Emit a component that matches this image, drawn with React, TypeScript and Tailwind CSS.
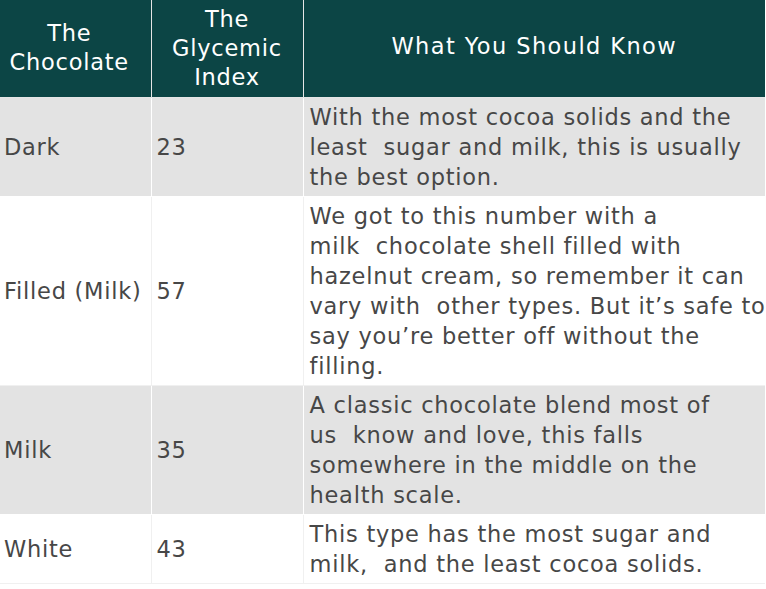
import React from "react";

const rows: { name: string; gi: string; lines: string[]; gray: boolean }[] = [
  {
    name: "Dark",
    gi: "23",
    lines: ["With the most cocoa solids and the", "least  sugar and milk, this is usually", "the best option."],
    gray: true,
  },
  {
    name: "Filled (Milk)",
    gi: "57",
    lines: [
      "We got to this number with a",
      "milk  chocolate shell filled with",
      "hazelnut cream, so remember it can",
      "vary with  other types. But it\u2019s safe to",
      "say you\u2019re better off without the",
      "filling.",
    ],
    gray: false,
  },
  {
    name: "Milk",
    gi: "35",
    lines: ["A classic chocolate blend most of", "us  know and love, this falls", "somewhere in the middle on the", "health scale."],
    gray: true,
  },
  {
    name: "White",
    gi: "43",
    lines: ["This type has the most sugar and", "milk,  and the least cocoa solids."],
    gray: false,
  },
];

export default function App() {
  return (
    <div className="w-[766px] h-[589px] bg-white" style={{ fontFamily: '"DejaVu Sans", sans-serif' }}>
      <table className="w-[765px] border-collapse table-fixed text-[22.5px] tracking-[0.75px] leading-[30px] text-[#474747]">
        <colgroup>
          <col className="w-[151px]" />
          <col className="w-[152px]" />
          <col />
        </colgroup>
        <thead>
          <tr className="bg-[#0c4545] text-white h-[97px]">
            <th className="font-normal text-center leading-[29px] border-r border-b border-[#e6e6e6] pl-0 pr-[12px] whitespace-nowrap">The<br />Chocolate</th>
            <th className="font-normal text-center leading-[29px] border-r border-b border-[#e6e6e6] px-1">The<br />Glycemic<br />Index</th>
            <th className="font-normal text-center leading-[29px] tracking-[1.4px] pb-[3px] border-b border-[#e6e6e6] px-1">What You Should Know</th>
          </tr>
        </thead>
        <tbody>
          {rows.map((r) => (
            <tr key={r.name} className={r.gray ? "bg-[#e3e3e3]" : "bg-white"}>
              <td className={`pl-1 pr-0 py-1 align-middle whitespace-nowrap border-r border-b ${r.gray ? "border-white" : "border-[#f0f0f0]"}`}>{r.name}</td>
              <td className={`pl-[5px] py-1 align-middle border-r border-b ${r.gray ? "border-white" : "border-[#f0f0f0]"}`}>{r.gi}</td>
              <td className={`pl-[6px] py-1 align-middle whitespace-pre border-b ${r.gray ? "border-white" : "border-[#f0f0f0]"}`}>
                {r.lines.map((l, i) => (
                  <div key={i}>{l}</div>
                ))}
              </td>
            </tr>
          ))}
        </tbody>
      </table>
    </div>
  );
}
